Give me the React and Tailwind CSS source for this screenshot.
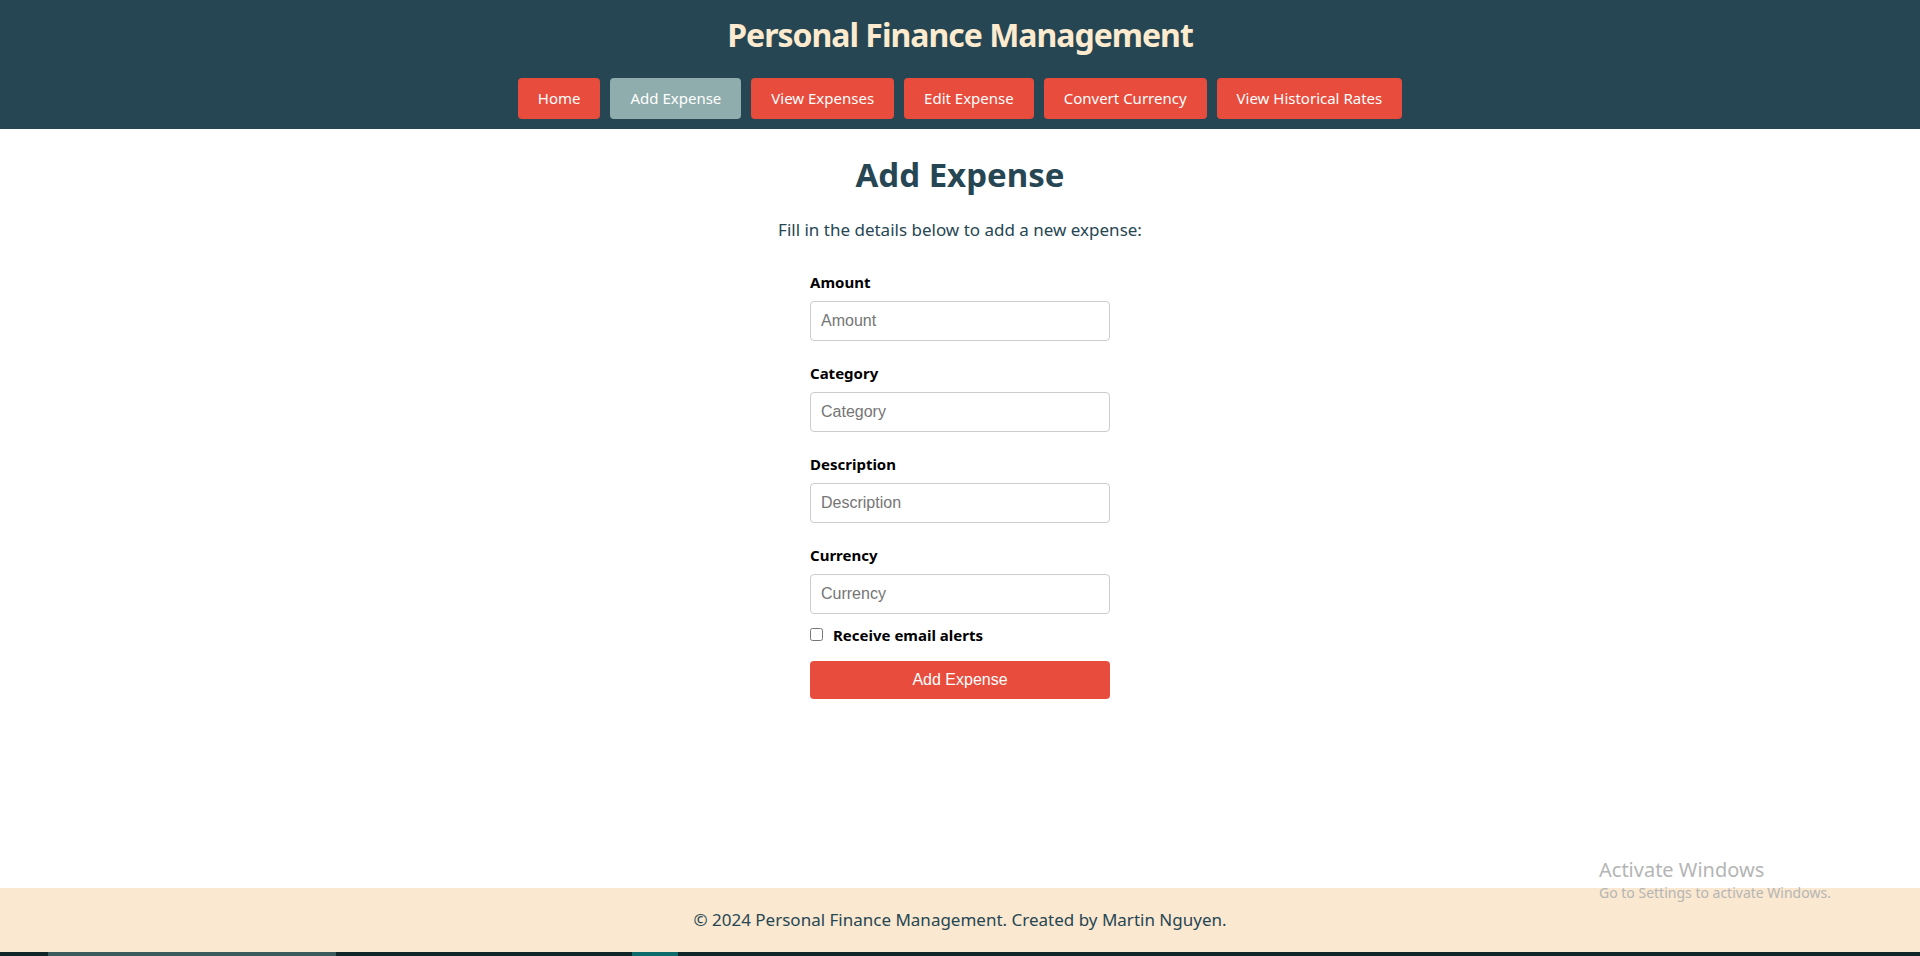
import React from 'react';

const NAV = ['Home', 'Add Expense', 'View Expenses', 'Edit Expense', 'Convert Currency', 'View Historical Rates'];
const FIELDS = ['Amount', 'Category', 'Description', 'Currency'];

const App = () => {
  return (
    <div className="h-[956px] flex flex-col bg-white relative" style={{ fontFamily: '"Segoe UI", "Noto Sans", sans-serif' }}>
      <header className="bg-[#264653] h-[129px] flex flex-col items-center pt-[15px]">
        <h1 className="text-[32px] font-bold text-[#fdebd0] leading-[40px] tracking-[-1px]">Personal Finance Management</h1>
        <nav className="flex gap-[10px] mt-[23px]">
          {NAV.map((n) => (
            <button
              key={n}
              className={`h-[41px] px-5 rounded-[4px] text-white text-[15px] ${n === 'Add Expense' ? 'bg-[#8fadac]' : 'bg-[#e74c3c]'}`}
            >
              {n}
            </button>
          ))}
        </nav>
      </header>

      <main className="flex-1 flex flex-col items-center">
        <h2 className="text-[33px] font-bold text-[#264653] leading-[40px] mt-[26px]">Add Expense</h2>
        <p className="text-[17px] text-[#264653] mt-[22px]">Fill in the details below to add a new expense:</p>
        <form className="w-[300px] mt-[29px] flex flex-col" onSubmit={(e) => e.preventDefault()}>
          {FIELDS.map((f, i) => (
            <div key={f} className={i < FIELDS.length - 1 ? 'mb-[22px]' : 'mb-[13px]'}>
              <label className="block text-[15px] font-bold text-black leading-[20px] mb-[9px]">{f}</label>
              <input
                placeholder={f}
                className="w-full h-[40px] px-[10px] border border-[#ccc] rounded-[4px] text-[16px] placeholder:text-[#757575] outline-none"
                style={{ fontFamily: '"Liberation Sans", Arial, sans-serif' }}
              />
            </div>
          ))}
          <label className="flex items-center gap-[10px] text-[15px] font-bold text-black -mt-[3px]">
            <input type="checkbox" className="w-[13px] h-[13px] m-0" />
            Receive email alerts
          </label>
          <button
            type="submit"
            className="mt-[15px] h-[38px] w-full bg-[#e74c3c] text-white text-[16px] rounded-[4px]"
            style={{ fontFamily: '"Liberation Sans", Arial, sans-serif' }}
          >
            Add Expense
          </button>
        </form>
      </main>

      <footer className="bg-[#fae8d0] h-[64px] flex items-center justify-center">
        <p className="text-[17px] text-[#264653]">© 2024 Personal Finance Management. Created by Martin Nguyen.</p>
      </footer>
      <div className="h-[4px] bg-[#0f2528] flex">
        <div className="w-[48px]" />
        <div className="w-[288px] bg-[#3a5a5c]" />
        <div className="w-[296px]" />
        <div className="w-[46px] bg-[#0e6b6b]" />
      </div>

      <div className="absolute left-[1599px] top-[857px] text-[#b5b5b5] pointer-events-none">
        <div className="text-[20px] leading-[26px]">Activate Windows</div>
        <div className="text-[14px] leading-[20px]">Go to Settings to activate Windows.</div>
      </div>
    </div>
  );
};

export default App;
